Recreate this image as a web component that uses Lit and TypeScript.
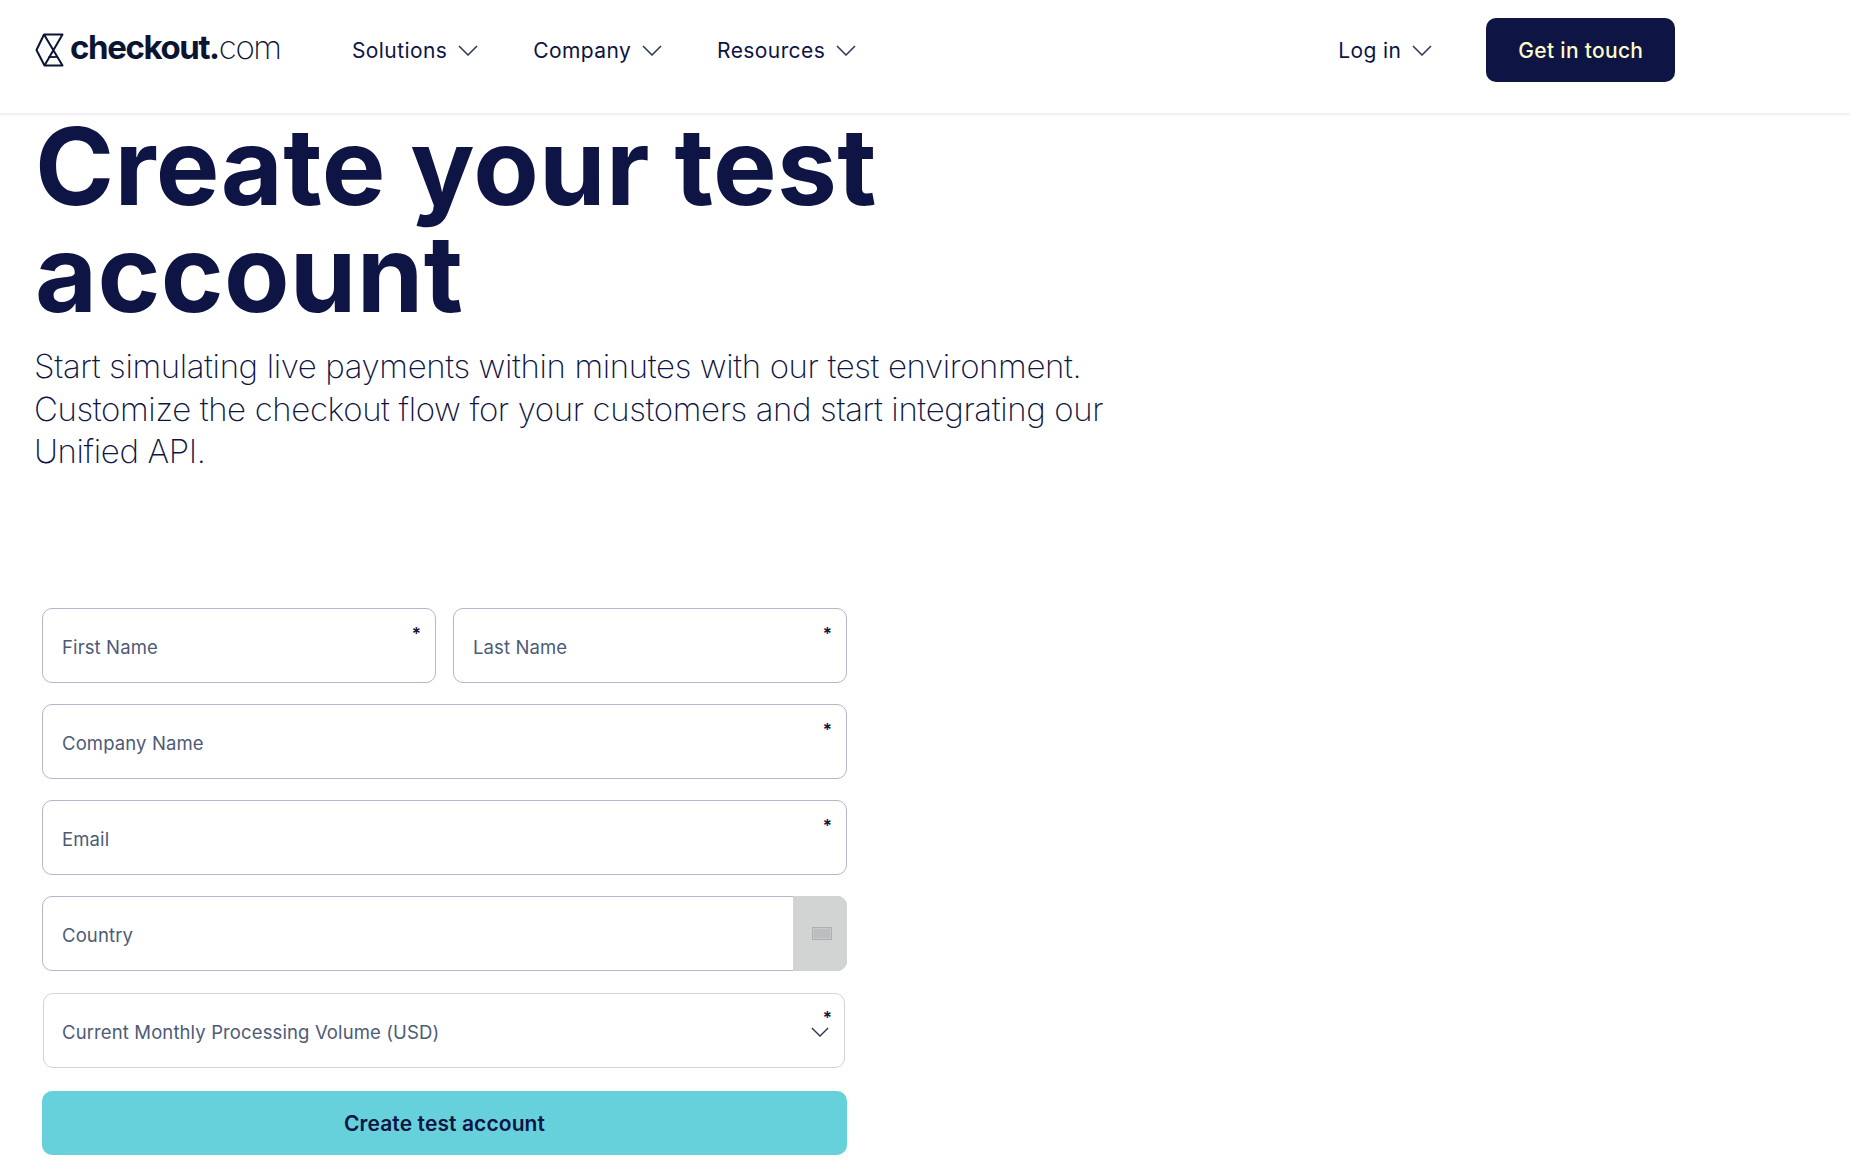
import { LitElement, css, html, svg } from 'lit';
import { customElement } from 'lit/decorators.js';

const chevron = (w = 20, h = 11) => html`<svg class="chev" width=${w} height=${h} viewBox="0 0 20 11" fill="none">
  ${svg`<path d="M1 1l9 9 9-9" stroke="#2a3558" stroke-width="1.5"/>`}
</svg>`;

@customElement('app-root')
export class AppRoot extends LitElement {
  render() {
    return html`
      <header>
        <a class="logo">
          <svg width="29" height="34" viewBox="0 0 29 34" fill="none">
            <path d="M9 1.500h18.500L9.500 32.500H27.500L9 1.500L1.500 17 9.500 32.500" stroke="#0b1533" stroke-width="2" stroke-linejoin="round"/>
            <path d="M13.500 24h9" stroke="#0b1533" stroke-width="1.800"/>
          </svg>
          <span class="word"><b>checkout.</b><span>com</span></span>
        </a>
        <nav>
          <a>Solutions ${chevron()}</a>
          <a>Company ${chevron()}</a>
          <a>Resources ${chevron()}</a>
        </nav>
        <a class="login">Log in ${chevron()}</a>
        <button class="touch">Get in touch</button>
      </header>
      <main>
        <h1>Create your test<br />account</h1>
        <p class="lead">Start simulating live payments within minutes with our test environment.<br />Customize the checkout flow for your customers and start integrating our<br />Unified API.</p>
        <form>
          <div class="row">
            <div class="field"><span>First Name</span><i>*</i></div>
            <div class="field"><span>Last Name</span><i>*</i></div>
          </div>
          <div class="field"><span>Company Name</span><i>*</i></div>
          <div class="field"><span>Email</span><i>*</i></div>
          <div class="field country">
            <span>Country</span>
            <div class="addon"><div class="kbd"></div></div>
          </div>
          <div class="field select">
            <span>Current Monthly Processing Volume (USD)</span>
            <i>*</i>
            ${chevron(18, 10)}
          </div>
          <button type="button" class="submit">Create test account</button>
        </form>
      </main>
    `;
  }

  static styles = css`
    :host {
      display: block;
      height: 1166px;
      overflow: hidden;
      background: #fff;
      color: #0e1443;
      font-family: Inter, 'Liberation Sans', sans-serif;
    }
    header {
      height: 114px;
      display: flex;
      align-items: center;
      padding: 0 0 13px 35px;
      border-bottom: 1px solid #eceef1;
      box-shadow: 0 1px 3px rgba(20, 30, 60, 0.08);
      box-sizing: border-box;
    }
    .logo {
      display: flex;
      align-items: center;
      gap: 6px;
      width: 317px;
      color: #0b1533;
    }
    .word {
      font-size: 33px;
      letter-spacing: -1.400px;
      position: relative;
      top: -3px;
    }
    .word b { font-weight: 700; }
    .word span { font-weight: 200; }
    nav {
      display: flex;
      gap: 55px;
    }
    nav a, .login {
      display: flex;
      align-items: center;
      gap: 11px;
      font-size: 21px;
      letter-spacing: 0.400px;
      white-space: nowrap;
    }
    .login { margin-left: 482px; }
    .touch {
      margin-left: 54px;
      width: 189px;
      height: 64px;
      border: 0;
      border-radius: 10px;
      background: #0e1443;
      color: #fdfbc6;
      font: 500 21px Inter, sans-serif;
      letter-spacing: 0.300px;
    }
    main { padding-left: 34px; }
    h1 {
      margin: -2px 0 0 1px;
      padding-top: 1px;
      font-size: 107px;
      line-height: 107px;
      font-weight: 700;
      letter-spacing: 0.300px;
      word-spacing: -1px;
    }
    .lead {
      margin: 18px 0 0;
      font-size: 33px;
      line-height: 42.500px;
      font-weight: 200;
      letter-spacing: -0.380px;
    }
    form {
      margin: 135px 0 0 8px;
      width: 805px;
      display: flex;
      flex-direction: column;
      gap: 21px;
    }
    .row {
      display: grid;
      grid-template-columns: 394px 394px;
      gap: 17px;
    }
    .field {
      position: relative;
      height: 75px;
      box-sizing: border-box;
      border: 1.500px solid #b5b6cb;
      border-radius: 10px;
      padding: 0 0 0 19px;
      display: flex;
      align-items: center;
      font-size: 18.500px;
      letter-spacing: 0.120px;
      color: #4d5b76;
    }
    .field span { position: relative; top: 2px; }
    .field i {
      position: absolute;
      top: 15px;
      right: 14px;
      font-style: normal;
      font-weight: 600;
      font-size: 17px;
      color: #0e1443;
    }
    .addon {
      position: absolute;
      top: -1px;
      right: -1px;
      bottom: -1px;
      width: 54px;
      background: #d2d4d4;
      border-radius: 0 10px 10px 0;
      display: flex;
      align-items: center;
      justify-content: center;
    }
    .kbd {
      width: 16px;
      height: 9px;
      margin-left: 3px;
      background: #bcbdbe;
      border: 1px solid #c8c9c9;
      outline: 1px solid #aeafb0;
    }
    .select {
      margin: 1px 2px 2px 1px;
      padding-left: 18px;
      border-color: #d3d3d8;
    }
    .select i {
      top: 14px;
      right: 12px;
    }
    .select .chev {
      position: absolute;
      right: 15px;
      top: 33px;
    }
    .submit {
      height: 64px;
      border: 0;
      padding-top: 2px;
      border-radius: 10px;
      background: #66d1db;
      color: #0e1443;
      font: 600 21px Inter, sans-serif;
      letter-spacing: 0.100px;
    }
  `;
}

declare global {
  interface HTMLElementTagNameMap {
    'app-root': AppRoot
  }
}
